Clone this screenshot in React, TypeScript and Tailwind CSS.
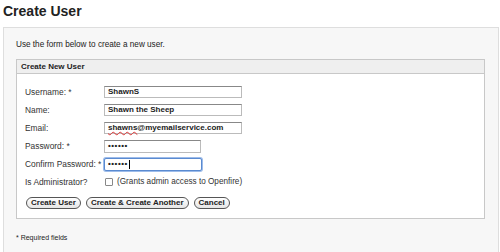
import React from "react";

const FONT = { fontFamily: '"Liberation Sans", Arial, sans-serif' };

interface FieldProps {
  label: string;
  children: React.ReactNode;
}

function Field({ label, children }: FieldProps) {
  return (
    <div className="flex h-[18px] items-center">
      <div className="w-[79px] text-[8.4px] text-[#333]">{label}</div>
      {children}
    </div>
  );
}

function TextBox({
  width,
  focused,
  children,
}: {
  width: string;
  focused?: boolean;
  children: React.ReactNode;
}) {
  return (
    <div
      className={`flex h-[12px] items-center border bg-white pl-[3px] text-[8px] font-bold text-[#222] ${width} ${
        focused
          ? "rounded-[2px] border-[#5a8ad0] shadow-[0_0_0_1px_#9dbcea]"
          : "border-[#bbb] border-t-[#888]"
      }`}
    >
      {children}
    </div>
  );
}

function Dots() {
  return <span className="tracking-[0.5px]">••••••</span>;
}

function PillButton({ children }: { children: React.ReactNode }) {
  return (
    <button className="flex h-[12px] items-center rounded-full border border-[#555] bg-gradient-to-b from-white to-[#e6e6e6] px-[4px] text-[8px] font-bold leading-none text-[#222]">
      {children}
    </button>
  );
}

export default function App() {
  return (
    <div className="h-[252px] w-[500px] overflow-hidden bg-white" style={FONT}>
      <h1 className="h-[27px] pl-[3px] pt-[2px] text-[14px] font-bold leading-[18px] text-[#222]">
        Create User
      </h1>
      <div className="ml-[3px] h-[240px] w-[496px] border border-[#dedede] bg-[#f7f7f7] pl-[12px] pr-[13px]">
        <p className="pt-[12px] text-[8.2px] leading-[10px] text-[#222]">
          Use the form below to create a new user.
        </p>
        <div className="mt-[9px] h-[160px] w-[469px] border border-[#c8c8c8] bg-white">
          <div className="flex h-[14px] items-center border-b border-[#c8c8c8] bg-[#efefef] pl-[4px] text-[8px] font-bold text-[#222]">
            Create New User
          </div>
          <div className="pl-[8px] pt-[9px]">
            <Field label="Username: *">
              <TextBox width="w-[138px]">ShawnS</TextBox>
            </Field>
            <Field label="Name:">
              <TextBox width="w-[138px]">Shawn the Sheep</TextBox>
            </Field>
            <Field label="Email:">
              <TextBox width="w-[138px]">
                <span className="underline decoration-[#d33] decoration-wavy decoration-[0.5px]">
                  shawns
                </span>
                @myemailservice.com
              </TextBox>
            </Field>
            <Field label="Password: *">
              <TextBox width="w-[97px] h-[13px]">
                <Dots />
              </TextBox>
            </Field>
            <Field label="Confirm Password: *">
              <TextBox width="w-[98px] h-[13px]" focused>
                <Dots />
                <span className="ml-[1px] inline-block h-[9px] w-[1px] bg-black" />
              </TextBox>
            </Field>
            <Field label="Is Administrator?">
              <div className="flex items-center gap-[4px] pl-[1px] text-[8.2px] text-[#333]">
                <span className="inline-block h-[8px] w-[8px] rounded-[1px] border border-[#888] bg-white" />
                (Grants admin access to Openfire)
              </div>
            </Field>
            <div className="mt-[6px] flex gap-[5px] pl-[1px]">
              <PillButton>Create User</PillButton>
              <PillButton>Create &amp; Create Another</PillButton>
              <PillButton>Cancel</PillButton>
            </div>
          </div>
        </div>
        <p className="pt-[14px] text-[7px] text-[#222]">* Required fields</p>
      </div>
    </div>
  );
}
